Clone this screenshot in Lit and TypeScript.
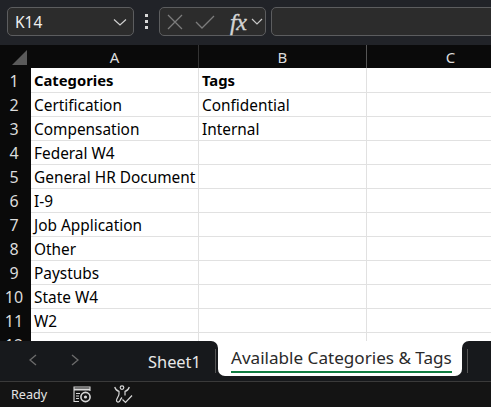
import { LitElement, html, css, svg } from "lit";
import { customElement } from "lit/decorators.js";

const ROWS: [string, string][] = [
  ["Categories", "Tags"],
  ["Certification", "Confidential"],
  ["Compensation", "Internal"],
  ["Federal W4", ""],
  ["General HR Document", ""],
  ["I-9", ""],
  ["Job Application", ""],
  ["Other", ""],
  ["Paystubs", ""],
  ["State W4", ""],
  ["W2", ""],
  ["", ""],
];

const chev = (w: number, h: number, d: string, color: string, sw = 1.2) => html`<svg width=${w} height=${h} viewBox="0 0 ${w} ${h}" fill="none" stroke=${color} stroke-width=${sw}>${svg`<path d=${d} />`}</svg>`;

@customElement("app-root")
export class AppRoot extends LitElement {
  static styles = css`
    :host { display: block; width: 491px; height: 407px; overflow: hidden; background: #17191c; font-family: "Noto Sans", "Open Sans", sans-serif; }
    .toolbar { height: 45px; box-sizing: border-box; background: #212328; display: flex; align-items: flex-start; padding: 7px 0 0 7px; }
    .box { height: 29px; box-sizing: border-box; background: #2c2c2c; border: 1px solid #5c5d5f; border-radius: 5px; display: flex; align-items: center; }
    .name { width: 127px; color: #f0f0f0; font-size: 15.5px; padding: 0 6px 0 7px; justify-content: space-between; }
    .kebab { width: 25px; height: 29px; display: flex; flex-direction: column; align-items: center; justify-content: center; gap: 3px; }
    .kebab i { width: 3px; height: 3px; background: #d8d8d8; display: block; }
    .fnbtns { width: 107px; padding-left: 7px; gap: 12px; }
    .fx { font-family: "Liberation Serif", serif; font-style: italic; font-weight: 400; font-size: 24px; line-height: 24px; color: #d4d4d4; -webkit-text-stroke: 0.35px #d4d4d4; width: 17px; margin-left: 3px; letter-spacing: -0.5px; }
    .fnbtns .chv { margin-left: -8px; display: flex; }
    .formula { flex: 1; margin-left: 5px; margin-right: -4px; }
    .grid-wrap { height: 296px; overflow: hidden; background: #fff; }
    .grid { display: grid; grid-template-columns: 31px 168px 168px 168px; grid-template-rows: 23px 25px; grid-auto-rows: 24px; }
    .corner, .ch { box-sizing: border-box; background: #0a0a0a; }
    .corner { display: flex; align-items: flex-end; padding: 0 0 3px 12px; }
    .ch { color: #dcdcdc; font-size: 15px; display: flex; align-items: center; justify-content: center; border-right: 1px solid #333; padding-top: 1px; }
    .ch.b { border-right-color: #555; }
    .rh { background: #0a0a0a; color: #dcdcdc; font-size: 16px; display: flex; align-items: center; justify-content: center; padding-right: 3px; box-sizing: border-box; }
    .cell { box-sizing: border-box; border-bottom: 1px solid #e1e1e1; border-right: 1px solid #e1e1e1; color: #000; font-size: 15.4px; padding: 1px 0 0 3px; display: flex; align-items: center; white-space: nowrap; background: #fff; }
    .cell.b { font-weight: 700; font-size: 14.8px; padding-top: 0; }
    .tabs { height: 40px; display: flex; background: #fff; }
    .left { width: 218px; background: #17191c; border-top-right-radius: 7px; display: flex; position: relative; }
    .nav { display: flex; width: 148px; align-items: center; padding: 0 0 2px 29px; box-sizing: border-box; gap: 34px; }
    .sheet { color: #e8e8e8; font-size: 16.4px; line-height: 42px; height: 40px; }
    .sep { position: absolute; top: 8px; width: 1px; height: 24px; background: #555; }
    .slot { width: 244px; height: 40px; background: #17191c; }
    .active { height: 35px; box-sizing: border-box; background: #fff; border-radius: 0 0 7px 7px; padding: 0 10px 0 13px; color: #2a2a2a; font-size: 17.1px; }
    .active span { display: block; height: 29px; padding-top: 1px; line-height: 32px; border-bottom: 2px solid #107c41; white-space: nowrap; box-sizing: content-box; }
    .right { flex: 1; background: #17191c; border-top-left-radius: 7px; position: relative; }
    .status { height: 26px; box-sizing: border-box; background: #141414; border-top: 1px solid #3a3a3a; display: flex; align-items: center; padding-left: 11px; color: #e4e4e4; font-size: 12.6px; }
    .status .ready { width: 62px; }
    .status svg { display: block; }
    .status .i2 { margin-left: 22px; }
  `;

  render() {
    return html`
      <div class="toolbar">
        <div class="box name"><span>K14</span>${chev(14, 8, "M1 1.5 L7 7 L13 1.5", "#d0d0d0")}</div>
        <div class="kebab"><i></i><i></i><i></i></div>
        <div class="box fnbtns">
          ${chev(16, 16, "M1 1 L15 15 M15 1 L1 15", "#7c7c7c", 1.3)}
          ${chev(20, 14, "M1 7 L7 13 L19 1", "#7c7c7c", 1.3)}
          <span class="fx">fx</span>
          <span class="chv">${chev(12, 7, "M1 1 L6 6 L11 1", "#c8c8c8")}</span>
        </div>
        <div class="box formula"></div>
      </div>
      <div class="grid-wrap">
        <div class="grid">
          <div class="corner"><svg width="15" height="15" viewBox="0 0 15 15"><path d="M15 0 V15 H0 Z" fill="#5a5a5a" /></svg></div>
          <div class="ch">A</div><div class="ch b">B</div><div class="ch">C</div>
          ${ROWS.map(([a, b], i) => html`
            <div class="rh">${i + 1}</div>
            <div class="cell ${i === 0 ? "b" : ""}">${a}</div>
            <div class="cell ${i === 0 ? "b" : ""}">${b}</div>
            <div class="cell"></div>
          `)}
        </div>
      </div>
      <div class="tabs">
        <div class="left">
          <div class="nav">
            ${chev(8, 12, "M7 1 L1 6 L7 11", "#6b6b6b", 1.4)}
            ${chev(8, 12, "M1 1 L7 6 L1 11", "#6b6b6b", 1.4)}
          </div>
          <span class="sheet">Sheet1</span>
          <div class="sep" style="left:215px"></div>
        </div>
        <div class="slot"><div class="active"><span>Available Categories &amp; Tags</span></div></div>
        <div class="right"><div class="sep" style="left:5px"></div></div>
      </div>
      <div class="status">
        <span class="ready">Ready</span>
        <svg width="19" height="17" viewBox="0 0 19 17" fill="none" stroke="#d8d8d8" stroke-width="1.1">
          <path d="M6 15.5 H1 V1 H17 V5" />
          <path d="M1 3.5 H17" stroke-width="2" />
          <path d="M3 7.5 H7 M3 10 H6 M3 12.5 H6" />
          <circle cx="12.5" cy="11" r="4.6" stroke-width="1.6" />
          <circle cx="12.5" cy="11" r="1.6" fill="#d8d8d8" stroke="none" />
        </svg>
        <svg class="i2" width="20" height="19" viewBox="0 0 20 19" fill="none" stroke="#d8d8d8" stroke-width="1.2">
          <circle cx="8" cy="2.6" r="1.8" />
          <path d="M0.7 2 C1.5 4.5 3.5 6 5 6.4 V9 C5 11.5 2.5 13 2.5 15.5 C2.5 17 4 17.5 5.5 16.5 C6.5 14.5 7 13.5 8 12.5" />
          <path d="M15.3 2 C14.5 4.5 12.5 6 11 6.4 V10.5" />
          <path d="M8.5 14.5 L11.5 17.5 L18 10.5" />
        </svg>
      </div>
    `;
  }
}
